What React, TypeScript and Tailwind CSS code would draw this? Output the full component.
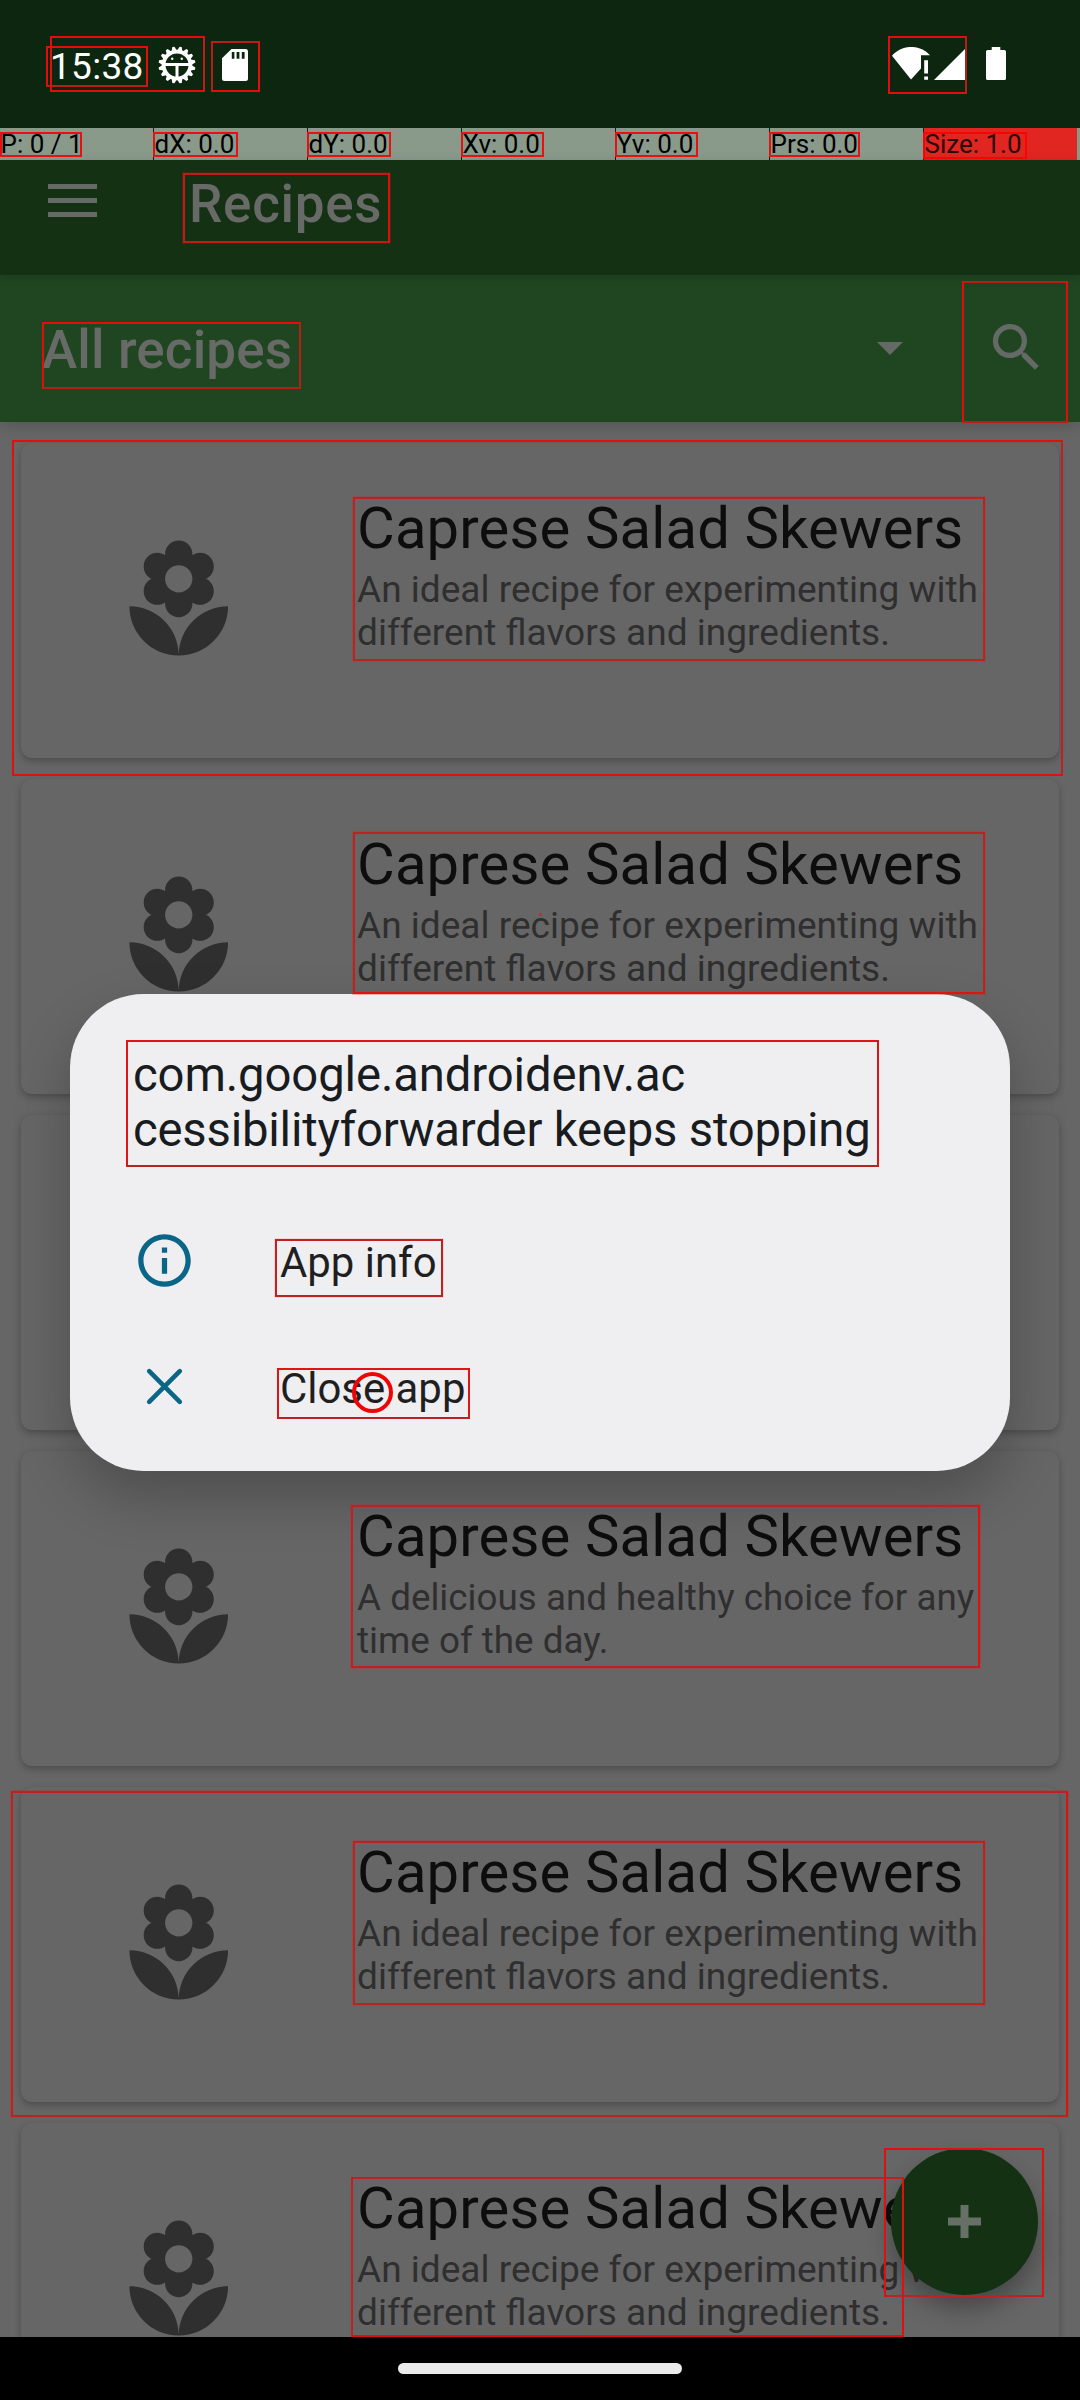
import React from "react";

type Recipe = { title: string; lines: [string, string]; size: string };

const ideal: Recipe = {
  title: "Caprese Salad Skewers",
  lines: ["An ideal recipe for experimenting with", "different flavors and ingredients."],
  size: "text-[37.05px]",
};
const healthy: Recipe = {
  title: "Caprese Salad Skewers",
  lines: ["A delicious and healthy choice for any", "time of the day."],
  size: "text-[36.8px]",
};
/* The third card sits wholly behind the dialog, so it has no content. */
const recipes: (Recipe | null)[] = [ideal, ideal, null, healthy, ideal, ideal];

const pointerStats = ["P: 0 / 1", "dX: 0.0", "dY: 0.0", "Xv: 0.0", "Yv: 0.0", "Prs: 0.0"];

/* Outlines of the detected elements, drawn above everything else. */
const outlines = [
  "left-[46px] top-[46px] w-[102px] h-[41px] border-[#e60c0c] border-b-[#b42018]",
  "left-[50px] top-[36px] w-[155px] h-[56px] border-[#e60c0c] border-r-[#c01c16]",
  "left-[211px] top-[41px] w-[49px] h-[51px] border-[#e60c0c] border-t-[#b42018] border-l-[#b42018]",
  "left-[888px] top-[36px] w-[79px] h-[58px] border-[#e60c0c] border-r-[#b42018]",
  "left-0 top-[132px] w-[82px] h-[25px] border-[#e81111]",
  "left-[153px] top-[132px] w-[85px] h-[25px] border-[#e81111]",
  "left-[307px] top-[132px] w-[84px] h-[25px] border-[#e81111]",
  "left-[461px] top-[132px] w-[83px] h-[25px] border-[#e81111]",
  "left-[615px] top-[132px] w-[83px] h-[25px] border-[#e81111]",
  "left-[769px] top-[132px] w-[91px] h-[25px] border-[#e81111]",
  "left-[923px] top-[132px] w-[104px] h-[27px] border-[#fa0303]",
  "left-[183px] top-[173px] w-[207px] h-[70px] border-[#c01c16] border-r-[#e60c0c] shadow-[0_0_0_1px_rgba(200,20,20,0.25)]",
  "left-[42px] top-[322px] w-[259px] h-[67px] border-[#e60c0c] border-b-[#b42018] border-r-[#b42018]",
  "left-[962px] top-[281px] w-[106px] h-[142px] border-[#e60c0c] border-t-[#b42018] border-b-[#b42018]",
  "left-[12px] top-[440px] w-[1051px] h-[336px] border-[#e01010] border-r-[#bb2222]",
  "left-[353px] top-[497px] w-[632px] h-[164px] border-[#bb2222] shadow-[0_0_0_1px_rgba(220,30,30,0.3)]",
  "left-[353px] top-[832px] w-[632px] h-[162px] border-[#bb2222] border-b-[#e01212] shadow-[0_0_0_1px_rgba(220,30,30,0.3)]",
  "left-[351px] top-[1505px] w-[629px] h-[163px] border-[#bb2222] border-r-[#e01010] shadow-[0_0_0_1px_rgba(220,30,30,0.3)]",
  "left-[11px] top-[1791px] w-[1057px] h-[326px] border-[#bb2222] border-r-[#e01010] shadow-[0_0_0_1px_rgba(220,30,30,0.3)]",
  "left-[353px] top-[1841px] w-[632px] h-[164px] border-[#bb2222] shadow-[0_0_0_1px_rgba(220,30,30,0.3)]",
  "left-[351px] top-[2177px] w-[553px] h-[160px] border-[#bb2222] border-b-[#e01010] border-r-[#e01010]",
  "left-[884px] top-[2148px] w-[160px] h-[149px] border-[#e01010] border-b-[#bb2222]",
  "left-[126px] top-[1040px] w-[753px] h-[127px] border-[#e01414] border-b-[#b92222]",
  "left-[275px] top-[1239px] w-[168px] h-[58px] border-[#bb2222] shadow-[0_0_0_1px_rgba(255,60,60,0.15)]",
  "left-[277px] top-[1368px] w-[193px] h-[51px] border-[#e01414] border-b-[#b92222]",
];

function FlowerIcon() {
  return (
    <svg viewBox="0 0 24 24" className="size-[131.5px]" fill="#2f2f2f">
      <path d="M12 22c4.97 0 9-4.03 9-9-4.97 0-9 4.03-9 9zM5.6 10.25c0 1.38 1.12 2.5 2.5 2.5.53 0 1.01-.16 1.42-.44l-.02.19c0 1.38 1.12 2.5 2.5 2.5s2.5-1.12 2.5-2.5l-.02-.19c.4.28.89.44 1.42.44 1.38 0 2.5-1.12 2.5-2.5 0-1-.59-1.85-1.43-2.25.84-.4 1.43-1.25 1.43-2.25 0-1.38-1.12-2.5-2.5-2.5-.53 0-1.01.16-1.42.44l.02-.19C14.5 2.12 13.38 1 12 1S9.5 2.12 9.5 3.5l.02.19c-.4-.28-.89-.44-1.42-.44-1.38 0-2.5 1.12-2.5 2.5 0 1 .59 1.85 1.43 2.25-.84.4-1.43 1.25-1.43 2.25zM12 5.5c1.38 0 2.5 1.12 2.5 2.5s-1.12 2.5-2.5 2.5S9.5 9.38 9.5 8s1.12-2.5 2.5-2.5zM3 13c0 4.97 4.03 9 9 9 0-4.97-4.03-9-9-9z" />
    </svg>
  );
}

function GearBugIcon() {
  const teeth = Array.from({ length: 16 }, (_, i) => (i + 0.5) * 22.5);
  return (
    <svg viewBox="0 0 38 38" className="size-[38px]">
      {teeth.map((a) => (
        <path key={a} d="M16.2 5 L17.9 0.5 H20.1 L21.8 5Z" fill="#fff" transform={`rotate(${a} 19 19)`} />
      ))}
      <circle cx="19" cy="19" r="13.4" fill="none" stroke="#fff" strokeWidth="3.8" />
      <path d="M5 18.6H33M19 18.6V33" stroke="#fff" strokeWidth="3" />
      <circle cx="14.2" cy="12.8" r="1.2" fill="#fff" />
      <circle cx="23.8" cy="12.8" r="1.2" fill="#fff" />
    </svg>
  );
}

function StatusBar() {
  return (
    <div className="flex h-32 items-start bg-[#0c260f] text-white">
      <span className="mt-[44.5px] ml-[50px] w-[108px] text-[37px] leading-[44px] tracking-[0.3px]">15:38</span>
      <div className="mt-[46px]">
        <GearBugIcon />
      </div>
      <svg viewBox="0 0 26 32" className="mt-[49px] ml-[26px] h-8 w-[26px]">
        <path d="M9.5 0H23.5Q26 0 26 2.5V29.5Q26 32 23.5 32H2.5Q0 32 0 29.5V9.3Z" fill="#fff" />
        <path d="M9.8 3h2.6v6.8H9.8zM14.6 3h2.8v6.8h-2.8zM19.8 3h2.8v6.8h-2.8z" fill="#0c260f" />
      </svg>
      <svg viewBox="0 0 40 33" className="mt-[47px] ml-[644px] h-[33px] w-10">
        <path d="M0 8.8C10-2.9 28-2.9 38 8.2H29V21.5L19 32.6Z" fill="#fff" />
        <path d="M32.2 13.2h3.8v13.4h-3.8zM32.2 29.4h3.8v3.3h-3.8z" fill="#fff" />
      </svg>
      <svg viewBox="0 0 31 31" className="mt-[49px] ml-[2px] h-[31px] w-[31px]">
        <path d="M31 0V31H0Z" fill="#fff" />
      </svg>
      <svg viewBox="0 0 20 33" className="mt-[47px] ml-[21px] h-[33px] w-5">
        <path d="M5.7 0H14.3V3H18.4Q20 3 20 4.6V31.4Q20 33 18.4 33H1.6Q0 33 0 31.4V4.6Q0 3 1.6 3H5.7Z" fill="#fff" />
      </svg>
    </div>
  );
}

function PointerStrip() {
  return (
    <div className="flex h-8 bg-[#0c260f] text-[26px] leading-8 text-black">
      {pointerStats.map((s) => (
        <div key={s} className="mr-px w-[153px] bg-[#899a8b] pl-[0.5px] whitespace-nowrap">
          {s}
        </div>
      ))}
      <div className="w-[153px] bg-[#e12622] pl-[0.5px] whitespace-nowrap text-[#2a0606]">Size: 1.0</div>
      <div className="grow bg-[#899a8b]" />
    </div>
  );
}

function RecipeCard({ recipe }: { recipe: Recipe | null }) {
  return (
    <div className="flex h-[315px] shrink-0 rounded-[11px] bg-[#666666] shadow-[0_3px_7px_rgba(0,0,0,0.26)]">
      {recipe && (
        <>
          <div className="flex w-[315px] items-center justify-center">
            <FlowerIcon />
          </div>
          <div className="pt-[51px] pl-[21px] whitespace-nowrap">
            <h2 className="text-[58px] leading-[68px] tracking-[0.14px] text-[#0d0d0d]">{recipe.title}</h2>
            <p className={`mt-[6px] leading-[43px] text-[#2f2f2f] ${recipe.size}`}>
              {recipe.lines[0]}
              <br />
              {recipe.lines[1]}
            </p>
          </div>
        </>
      )}
    </div>
  );
}

function CrashDialog() {
  return (
    <div className="absolute top-[994px] left-[70px] h-[477px] w-[940px] rounded-[73.5px] bg-[#efeff2] shadow-[0_26px_56px_rgba(0,0,0,0.24)]">
      <p className="mt-[53.5px] ml-[63px] text-[47.25px] leading-[55px] whitespace-nowrap text-[#191c1e]">
        <span className="tracking-[-0.12px]">com.google.androidenv.ac</span>
        <br />
        <span className="tracking-[-0.21px]">cessibilityforwarder keeps stopping</span>
      </p>
      <div className="mt-[40px] flex h-[126px] items-center pl-[63px]">
        <svg viewBox="0 0 24 24" className="size-[63px]" fill="#0b6587">
          <path d="M11 7h2v2h-2zm0 4h2v6h-2zm1-9C6.48 2 2 6.48 2 12s4.48 10 10 10 10-4.48 10-10S17.52 2 12 2zm0 18c-4.41 0-8-3.59-8-8s3.59-8 8-8 8 3.59 8 8-3.59 8-8 8z" />
        </svg>
        <span className="mt-[5px] ml-[84px] text-[41.9px] leading-[50px] text-[#1f1f1f]">App info</span>
      </div>
      <div className="flex h-[126px] items-center pl-[63px]">
        <svg viewBox="0 0 63 63" className="size-[63px]">
          <path d="M16.2 16.2L46.8 46.8M46.8 16.2L16.2 46.8" stroke="#0b6587" strokeWidth="4.6" strokeLinecap="round" />
        </svg>
        <span className="mt-[5px] ml-[84px] text-[41.9px] leading-[50px] text-[#1f1f1f]">Close app</span>
      </div>
    </div>
  );
}

export default function App() {
  return (
    <div className="relative flex h-[2400px] w-[1080px] flex-col overflow-hidden bg-[#666666] font-[Roboto,sans-serif]">
      <StatusBar />
      <PointerStrip />
      <header className="relative z-20 flex h-[115px] items-start bg-[#143114] text-[#676a67] shadow-[0_2px_10px_rgba(0,0,0,0.14)]">
        <div className="mt-6 ml-12 flex w-[49px] flex-col gap-[9px]">
          <div className="h-[5px] bg-[#666a66]" />
          <div className="h-[5px] bg-[#666a66]" />
          <div className="h-[5px] bg-[#666a66]" />
        </div>
        <h1 className="mt-[13px] ml-[92px] text-[53px] leading-[62px] font-medium tracking-[0.7px]">Recipes</h1>
      </header>
      <div className="relative z-10 flex h-[147px] items-start bg-[#1f4621] text-[#676a67] shadow-[0_3px_14px_rgba(0,0,0,0.18)]">
        <span className="mt-[44px] ml-[42px] w-[835px] text-[53px] leading-[62px] font-medium tracking-[0.15px]">
          All recipes
        </span>
        <svg viewBox="0 0 26 13" className="mt-[67px] h-[13px] w-[26px]">
          <path d="M0 0H26L13 13Z" fill="#666a66" />
        </svg>
        <svg viewBox="0 0 24 24" className="mt-[41px] ml-[81.5px] size-[63px]" fill="#666a66">
          <path d="M15.5 14h-.79l-.28-.27C15.41 12.59 16 11.11 16 9.5 16 5.91 13.09 3 9.5 3S3 5.91 3 9.5 5.91 16 9.5 16c1.61 0 3.09-.59 4.23-1.57l.27.28v.79l5 4.99L20.49 19l-4.99-5zm-6 0C7.01 14 5 11.99 5 9.5S7.01 5 9.5 5 14 7.01 14 9.5 11.99 14 9.5 14z" />
        </svg>
      </div>
      <main className="flex h-[1915px] flex-col gap-[21px] overflow-hidden px-[21px] pt-[21px]">
        {recipes.map((r, i) => (
          <RecipeCard key={i} recipe={r} />
        ))}
      </main>
      <footer className="flex h-[63px] justify-center bg-black pt-[26px]">
        <div className="h-[11px] w-[284px] rounded-full bg-[#ebebeb]" />
      </footer>

      <div className="absolute top-[2148px] left-[891px] flex size-[147px] items-center justify-center rounded-full bg-[#143114] shadow-[0_14px_24px_rgba(0,0,0,0.3)]">
        <svg viewBox="0 0 35 35" className="size-[35px]">
          <path d="M17.5 1V34M1 17.5H34" stroke="#667066" strokeWidth="8" />
        </svg>
      </div>

      <CrashDialog />

      <div className="absolute top-[913px] left-[539px] size-[3px] bg-[#a83a3a]" />
      <div className="absolute top-[1372px] left-[352px] size-[41px] rounded-full border-4 border-[#f00505]" />
      {outlines.map((o) => (
        <div key={o} className={`absolute z-30 border-2 ${o}`} />
      ))}
    </div>
  );
}
